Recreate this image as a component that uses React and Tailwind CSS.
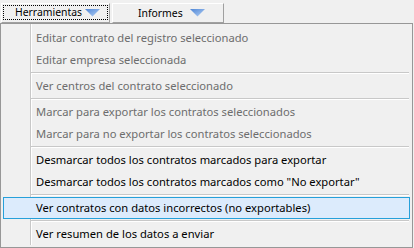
import React from "react"

const font = { fontFamily: '"Noto Sans", "Open Sans", sans-serif' }

function Arrow() {
  return (
    <svg width="15" height="8" viewBox="0 0 15 8" className="shrink-0">
      <defs>
        <linearGradient id="arr" x1="0" y1="0" x2="1" y2="1">
          <stop offset="0" stopColor="#4f86d6" />
          <stop offset="1" stopColor="#b4d0f4" />
        </linearGradient>
      </defs>
      <polygon points="0,0 15,0 7.5,7.5" fill="url(#arr)" />
    </svg>
  )
}

const menu = [
  { label: "Editar contrato del registro seleccionado", disabled: true },
  { label: "Editar empresa seleccionada", disabled: true },
  "sep",
  { label: "Ver centros del contrato seleccionado", disabled: true },
  "sep",
  { label: "Marcar para exportar los contratos seleccionados", disabled: true },
  { label: "Marcar para no exportar los contratos seleccionados", disabled: true },
  "sep",
  { label: "Desmarcar todos los contratos marcados para exportar" },
  { label: 'Desmarcar todos los contratos marcados como "No exportar"' },
  "sep",
  { label: "Ver contratos con datos incorrectos (no exportables)", active: true },
  "sep",
  { label: "Ver resumen de los datos a enviar" },
]

export default function App() {
  return (
    <div className="w-[414px] h-[248px] overflow-hidden bg-[#f0f0f0] text-[11.2px] text-black" style={font}>
      <div className="flex h-[23px] items-start gap-[2px] pl-[1px] pt-[3px] text-[10.4px]">
        <div className="h-[20px] w-[109px] border-t border-l border-t-white border-l-white border-r border-b border-r-[#a0a0a0] border-b-[#a0a0a0] p-[1px] pb-[2px]">
          <div className="flex h-full items-center border border-dotted border-black pl-[11px]">
            <span className="w-[70px] leading-none whitespace-nowrap">Herramientas</span>
            <Arrow />
          </div>
        </div>
        <div className="flex h-[20px] w-[112px] items-center border-t border-l border-t-white border-l-white border-r border-b border-r-[#a0a0a0] border-b-[#a0a0a0] pl-[25px]">
          <span className="w-[52px] leading-none whitespace-nowrap">Informes</span>
          <Arrow />
        </div>
      </div>
      <div className="w-[413px] border border-[#979797] px-[2px] pt-[3px] pb-[2px] bg-no-repeat bg-[linear-gradient(to_right,transparent_29px,#c8c8c8_29px,#c8c8c8_30px,#ffffff_30px,#ffffff_31px,transparent_31px)] bg-size-[100%_calc(100%-2px)]">
        {menu.map((item, i) =>
          item === "sep" ? (
            <div key={i} className="h-[4px] pl-[28px] pr-[1px] pt-[1px]">
              <div className="h-[1px] bg-[#c8c8c8]" />
              <div className="h-[1px] bg-white" />
            </div>
          ) : (
            <div
              key={i}
              className={
                item.active
                  ? "flex h-[22px] items-center border border-[#26a0da] bg-[#dcebfc] pl-[32px]"
                  : "flex h-[22px] items-center pl-[33px]"
              }
            >
              <span className={item.disabled ? "whitespace-nowrap text-[#6d6d6d]" : "whitespace-nowrap"}>
                {item.label}
              </span>
            </div>
          )
        )}
      </div>
    </div>
  )
}
